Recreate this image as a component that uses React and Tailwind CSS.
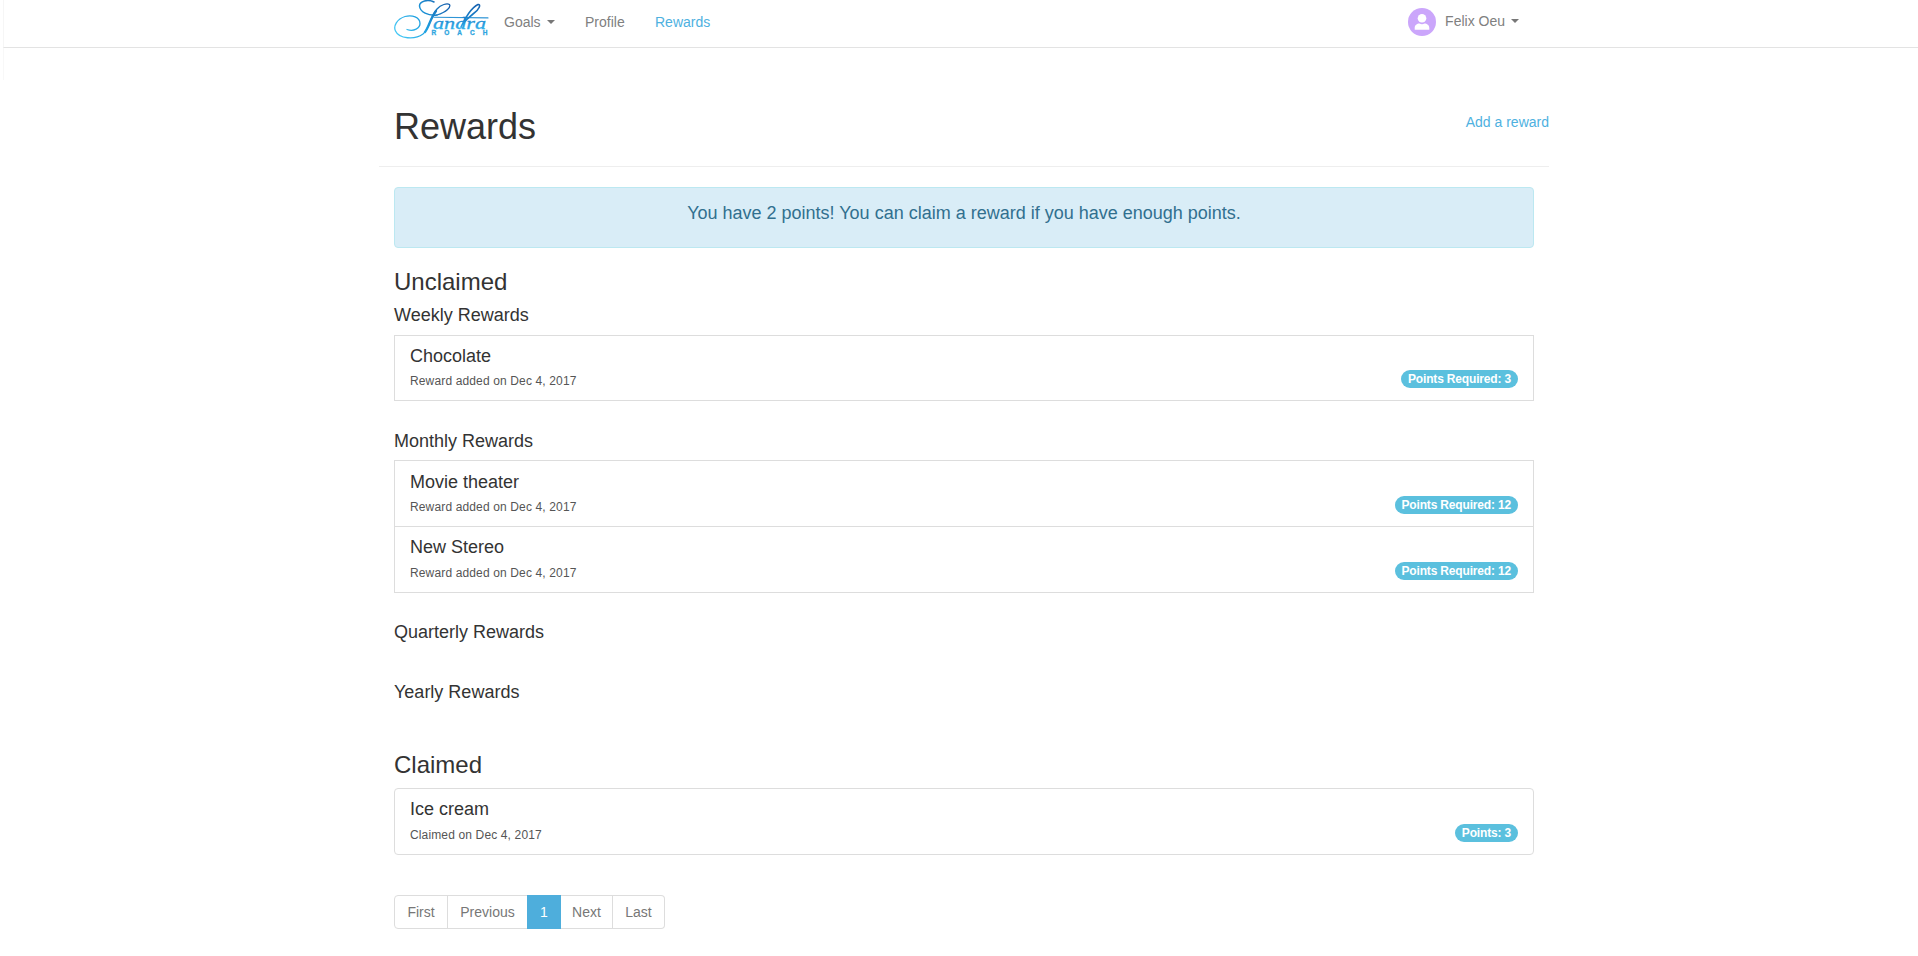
const Caret = () => (
  <span className="ml-[6px] h-0 w-0 border-x-4 border-t-4 border-x-transparent border-t-[#777]" />
);

function Logo() {
  return (
    <svg width="98" height="40" viewBox="0 0 98 40" className="block shrink-0" aria-label="Sandra Roach">
      <defs>
        <linearGradient id="ink" gradientUnits="userSpaceOnUse" x1="0" y1="38" x2="52" y2="2">
          <stop offset="0" stopColor="#4fd0f8" />
          <stop offset="0.5" stopColor="#1e9fe0" />
          <stop offset="1" stopColor="#1560ae" />
        </linearGradient>
        <linearGradient id="wash" gradientUnits="userSpaceOnUse" x1="0" y1="4" x2="0" y2="30">
          <stop offset="0" stopColor="#155fae" />
          <stop offset="0.600" stopColor="#1a86cf" />
          <stop offset="1" stopColor="#35b6ee" />
        </linearGradient>
      </defs>
      <g fill="none" stroke="url(#ink)" strokeLinecap="round">
        <path strokeWidth="1.300" d="M13 29.500 C20 32 26 28 26 23.500 C26 17 18 14.500 11 16.500 C3 19 -1 26 1.500 31 C5 39 21 40 29 34 C36 28 36 17 43 9 C47 4.500 53 3 55.500 4.500 C57 7 53 12 43 15" />
        <path strokeWidth="2.300" d="M31 32 C35 27 36 19 42 11" />
        <path strokeWidth="1.500" d="M43 15 C34 16 26 12 25.500 6 C25.500 1 34 -1 40 2" />
      </g>
      <g fill="none" stroke="url(#wash)" strokeLinecap="round">
        <path strokeWidth="1.100" stroke="#2f95d6" d="M40 17.300 L94 17.900" />
        <path strokeWidth="1.600" d="M67 27 C71 18 78 7 84 4.500 C87 4 86 9 79 14 C75 17 71 21 68 25" />
      </g>
      <text x="39" y="28.500" textLength="53" lengthAdjust="spacingAndGlyphs" fontSize="17.500" fontStyle="italic" fontFamily="Liberation Serif, serif" fill="url(#wash)" stroke="url(#wash)" strokeWidth="0.300">andra</text>
      <text x="37.500" y="35" textLength="56" fontSize="6.500" fontWeight="700" fontFamily="Liberation Sans Narrow, Liberation Sans, sans-serif" fill="#2fa6e0" stroke="#2fa6e0" strokeWidth="0.300">ROACH</text>
    </svg>
  );
}

function Reward({ title, note, points, className }) {
  return (
    <li className={`flex items-stretch justify-between border border-[#ddd] px-[15px] ${className}`}>
      <div className="flex flex-col justify-between pb-[10px]">
        <div className="text-[18px] leading-5">{title}</div>
        <div className="text-[12px] leading-[17px] tracking-[0.14px] text-[#555]">{note}</div>
      </div>
      <span className="mb-3 flex h-[18px] items-center self-end rounded-[10px] bg-[#5bc0de] px-[7px] text-[12px] leading-none font-bold tracking-[-0.17px] text-white">
        {points}
      </span>
    </li>
  );
}

const Heading = ({ children, className }) => (
  <h3 className={`text-[18px] leading-5 ${className}`}>{children}</h3>
);

export default function App() {
  return (
    <div className="h-[956px] overflow-hidden bg-white font-['Liberation_Sans',Arial,sans-serif] text-[14px] leading-5 text-[#333]">
      <header className="ml-[3px] h-12 border-b border-l border-b-[#e3e3e3] border-l-[#f6f6f6]">
        <div className="ml-[390px] flex w-[1140px] items-start text-[#808080]">
          <Logo />
          <nav className="ml-3 flex pt-3">
            <a className="flex w-[81px] items-center">Goals<Caret /></a>
            <a className="w-[70px]">Profile</a>
            <a className="text-[#4eb1df]">Rewards</a>
          </nav>
          <div className="mr-[15px] ml-auto flex pt-2">
            <svg width="28" height="28" viewBox="0 0 28 28">
              <circle cx="14" cy="14" r="14" fill="#cba6fb" />
              <circle cx="14" cy="10.300" r="4.300" fill="#fff" />
              <path d="M6.700 21.700v-1.700c0-3 2.300-4.600 4.800-4.600 1.600 1 3.400 1 5 0 2.500 0 4.800 1.600 4.800 4.600v1.700z" fill="#fff" />
            </svg>
            <span className="ml-[9px] flex h-5 items-center pt-[6px]">Felix Oeu<Caret /></span>
          </div>
        </div>
      </header>
      <div className="ml-[3px] h-8 border-l border-[#f8f8f8]" />

      <main className="ml-[394px] w-[1140px]">
        <div className="-mx-[15px] flex h-[87px] justify-between border-b border-[#eee] pl-[15px]">
          <h1 className="pt-[27px] text-[36px] leading-10">Rewards</h1>
          <a className="pt-8 text-[#4eb1df]">Add a reward</a>
        </div>
        <div className="mt-5 h-[61px] rounded border border-[#bce8f1] bg-[#d9edf7] pt-[15px] text-center text-[18px] leading-5 text-[#31708f]">
          You have 2 points! You can claim a reward if you have enough points.
        </div>

        <h2 className="mt-5 text-[24px] leading-[27px]">Unclaimed</h2>
        <Heading className="mt-[10px]">Weekly Rewards</Heading>
        <ul className="mt-[10px]">
          <Reward className="h-[66px] pt-[10px]" title="Chocolate" note="Reward added on Dec 4, 2017" points="Points Required: 3" />
        </ul>
        <Heading className="mt-[30px]">Monthly Rewards</Heading>
        <ul className="mt-[9px]">
          <Reward className="h-[67px] pt-[11px]" title="Movie theater" note="Reward added on Dec 4, 2017" points="Points Required: 12" />
          <Reward className="-mt-px h-[67px] pt-[10px]" title="New Stereo" note="Reward added on Dec 4, 2017" points="Points Required: 12" />
        </ul>
        <Heading className="mt-[29px]">Quarterly Rewards</Heading>
        <Heading className="mt-10">Yearly Rewards</Heading>

        <h2 className="mt-[49px] text-[24px] leading-[27px]">Claimed</h2>
        <ul className="mt-[10px]">
          <Reward className="h-[67px] rounded pt-[10px]" title="Ice cream" note="Claimed on Dec 4, 2017" points="Points: 3" />
        </ul>

        <nav className="mt-10 flex h-[34px] text-[#777]">
          <a className="flex w-[54px] items-center justify-center rounded-l border border-[#ddd]">First</a>
          <a className="-ml-px flex w-[81px] items-center justify-center border border-[#ddd]">Previous</a>
          <a className="-ml-px flex w-[34px] items-center justify-center bg-[#4eaedc] text-white">1</a>
          <a className="flex w-[52px] items-center justify-center border border-l-0 border-[#ddd]">Next</a>
          <a className="flex w-[52px] items-center justify-center rounded-r border border-l-0 border-[#ddd]">Last</a>
        </nav>
      </main>
    </div>
  );
}
